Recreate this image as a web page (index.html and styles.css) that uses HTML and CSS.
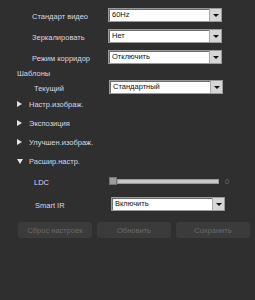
FILE: index.html
```html
<!DOCTYPE html>
<html>
<head>
    <title>Настройки изображения</title>
    <meta name="viewport" content="width=device-width, initial-scale=1.0">
    <link rel="stylesheet" href="styles.css">
</head>
<body>
    <div class="panel">
        <!-- Основные параметры -->
        <div class="form-row">
            <span class="label">Стандарт видео</span>
            <div class="select"><span class="value">60Hz</span><span class="arrow"></span></div>
        </div>
        <div class="form-row">
            <span class="label">Зеркалировать</span>
            <div class="select"><span class="value">Нет</span><span class="arrow"></span></div>
        </div>
        <div class="form-row">
            <span class="label">Режим корридор</span>
            <div class="select"><span class="value">Отключить</span><span class="arrow"></span></div>
        </div>

        <!-- Шаблоны -->
        <div class="group-title">Шаблоны</div>
        <div class="form-row current">
            <span class="label">Текущий</span>
            <div class="select"><span class="value">Стандартный</span><span class="arrow"></span></div>
        </div>

        <!-- Разделы -->
        <div class="tree-item"><span class="tri right"></span>Настр.изображ.</div>
        <div class="tree-item"><span class="tri right"></span>Экспозиция</div>
        <div class="tree-item"><span class="tri right"></span>Улучшен.изображ.</div>
        <div class="tree-item"><span class="tri down"></span>Расшир.настр.</div>

        <div class="form-row ldc">
            <span class="label">LDC</span>
            <div class="slider">
                <span class="thumb"></span>
                <span class="track"></span>
            </div>
            <span class="slider-value">0</span>
        </div>
        <div class="form-row smart">
            <span class="label">Smart IR</span>
            <div class="select"><span class="value">Включить</span><span class="arrow"></span></div>
        </div>

        <!-- Кнопки -->
        <div class="buttons">
            <button>Сброс настроек</button>
            <button>Обновить</button>
            <button>Сохранить</button>
        </div>
    </div>
</body>
</html>
```

FILE: styles.css
```css
body {
    margin: 0;
    padding: 0;
    background-color: #2f2f2f;
    color: #d8d8e2;
    font-family: 'Liberation Sans', Arial, sans-serif;
    font-size: 7.5px;
    height: 300px;
    overflow: hidden;
}

.panel {
    padding-top: 4px;
    display: flex;
    flex-direction: column;
}

/* Строки формы */
.form-row {
    display: flex;
    align-items: center;
    height: 21px;
}

.form-row .label {
    width: 76px;
    padding-left: 32px;
    padding-top: 3px;
}

.select {
    width: 114px;
    height: 14px;
    box-sizing: border-box;
    background: #fff;
    border: 1px solid #9a9a9a;
    box-shadow: inset 1px 1px 0 #6f6f6f;
    display: flex;
    align-items: stretch;
    color: #111;
}

.select .value {
    flex: 1;
    padding-left: 3px;
    line-height: 12px;
}

.select .arrow {
    width: 11px;
    background: #d6d6d6;
    border-left: 1px solid #a8a8a8;
    display: flex;
    align-items: center;
    justify-content: center;
}

.select .arrow::after {
    content: '';
    border-left: 3px solid transparent;
    border-right: 3px solid transparent;
    border-top: 3px solid #111;
    margin-top: 1px;
}

/* Шаблоны */
.group-title {
    padding-left: 17px;
    height: 12px;
    line-height: 14px;
}

.form-row.current {
    height: 15px;
}

.form-row.current .label {
    width: 75px;
    padding-left: 34px;
}

/* Разделы */
.tree-item {
    height: 19px;
    display: flex;
    align-items: center;
    padding-left: 17px;
    padding-top: 1px;
    box-sizing: border-box;
}

.tree-item:first-of-type {
    margin-top: 4px;
}

.tri {
    width: 12px;
    display: inline-flex;
}

.tri.right::before {
    content: '';
    border-top: 3px solid transparent;
    border-bottom: 3px solid transparent;
    border-left: 5px solid #e4e4e4;
}

.tri.down::before {
    content: '';
    border-left: 3px solid transparent;
    border-right: 3px solid transparent;
    border-top: 5px solid #e4e4e4;
}

/* LDC */
.form-row.ldc {
    height: 22px;
}

.form-row.ldc .label {
    width: 75px;
    padding-left: 34px;
}

.slider {
    display: flex;
    align-items: center;
    width: 110px;
}

.slider .thumb {
    width: 8px;
    height: 8px;
    box-sizing: border-box;
    background: #9c9c9c;
    border: 1px solid #767676;
}

.slider .track {
    flex: 1;
    height: 5px;
    background: #c8c8c8;
    border: 1px solid #9a9a9a;
    box-sizing: border-box;
}

.slider-value {
    margin-left: 6px;
    color: #6c6c6c;
}

/* Smart IR */
.form-row.smart {
    height: 23px;
}

.form-row.smart .label {
    width: 76px;
    padding-left: 35px;
}

/* Кнопки */
.buttons {
    display: flex;
    gap: 5px;
    padding-left: 18px;
    margin-top: 7px;
}

.buttons button {
    width: 74px;
    height: 16px;
    padding: 0;
    background: #3b3b3b;
    border: none;
    border-radius: 3px;
    color: #6a6a6a;
    font-family: 'Liberation Sans', Arial, sans-serif;
    font-size: 7.5px;
}
```
